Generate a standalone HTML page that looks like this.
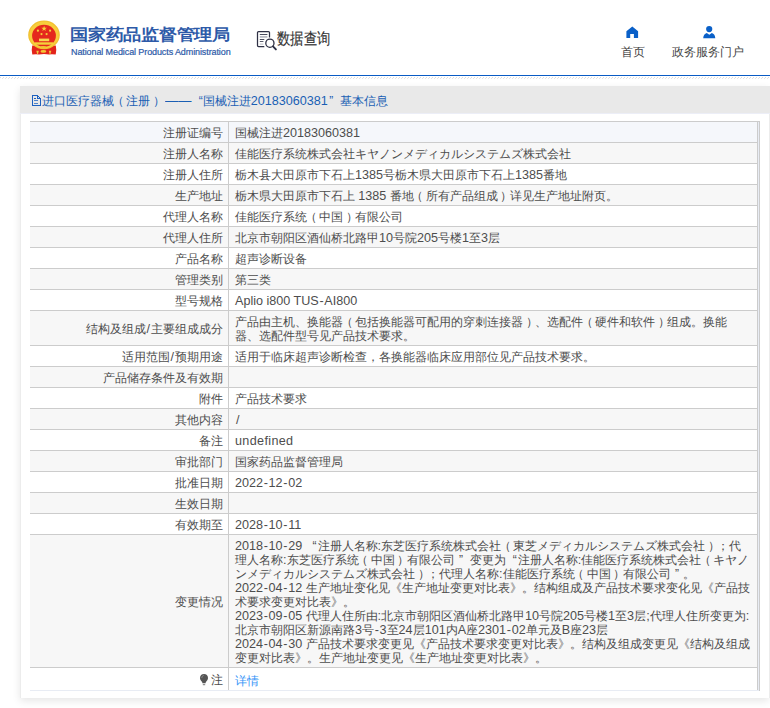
<!DOCTYPE html>
<html><head><meta charset="utf-8">
<style>
html,body{margin:0;padding:0;background:#fff;width:770px;height:708px;overflow:hidden;position:relative;font-family:"Liberation Sans",sans-serif;}
.abs{position:absolute;}
#emblem{position:absolute;left:26px;top:19px;width:36px;height:38px;}
#title{position:absolute;left:70px;top:21.8px;font-size:18px;font-weight:bold;color:#2d5aa8;white-space:nowrap;line-height:24px;letter-spacing:-0.25px;transform:scaleY(0.88);transform-origin:0 17px;}
#sub{position:absolute;left:71px;top:45.6px;font-size:9px;color:#2d5aa8;white-space:nowrap;line-height:12px;letter-spacing:-0.1px;-webkit-text-stroke:0.2px #2d5aa8;}
#sicon{position:absolute;left:256px;top:30px;width:22px;height:21px;}
#stext{position:absolute;left:277px;top:29px;font-size:16px;color:#333;white-space:nowrap;line-height:20px;transform-origin:0 0;transform:scaleX(0.835);-webkit-text-stroke:0.15px #333;}
.nav{position:absolute;font-size:12px;color:#444;white-space:nowrap;line-height:16px;}
#blue{position:absolute;left:0;top:75px;width:770px;height:1px;background:#0a5bc4;}
#hatch{position:absolute;left:0;top:77px;width:770px;height:2px;}
#panel{position:absolute;left:20px;top:86px;width:749px;height:612px;background:#fff;box-shadow:0 3px 8px rgba(0,0,0,0.10);}
#phead{position:absolute;left:20px;top:86px;width:750px;height:27px;background:#e9e9e9;}
#pline{position:absolute;left:20px;top:113px;width:750px;height:1px;background:#eceef7;}
#pl{position:absolute;left:20px;top:114px;width:1px;height:584px;background:#ececec;}
#pr{position:absolute;left:769px;top:114px;width:1px;height:584px;background:#ececec;}
#ptext{position:absolute;left:42px;top:92.5px;font-size:12px;color:#1a5fb4;white-space:nowrap;line-height:16px;}
#picon{position:absolute;left:31px;top:95px;width:10px;height:11px;}
#tbl{position:absolute;left:30px;top:121px;width:730px;height:570px;}
#ttop{position:absolute;left:30px;top:121px;width:730px;height:1px;background:#cccccc;}
.row{position:absolute;left:30px;width:728px;}
.lab{position:absolute;left:0;width:193px;text-align:right;font-size:12px;color:#4d4d4d;white-space:nowrap;}
.val{position:absolute;left:205px;font-size:12px;color:#4d4d4d;white-space:nowrap;line-height:14px;}
.hl{position:absolute;left:0;width:728px;height:1px;background:#cccccc;}
#vdiv{position:absolute;left:228px;top:121px;width:1px;height:569px;background:#cccccc;}
#vr1{position:absolute;left:757px;top:121px;width:1px;height:569px;background:#cccccc;}
#vr2{position:absolute;left:759px;top:121px;width:1px;height:570px;background:#cccccc;}
#vl{position:absolute;left:30px;top:122px;width:1px;height:569px;background:#eef1f7;opacity:0.5;}
#vb{position:absolute;left:30px;top:690px;width:728px;height:1px;background:#e8ecf4;}
#vm{position:absolute;left:758px;top:122px;width:1px;height:569px;background:#e8ecf4;}
.link{color:#3594f7;}
.l{font-size:12.6px;}
#ptext .l{top:0;}
.sl{margin:0 1px;}
#ptext .qr{padding-left:1.5px;}
#ptext .ql{width:10px;padding-left:6px;}
.hy{margin:0 0.7px;}
.pl{position:relative;left:-2.5px;}
.pr{position:relative;left:2.5px;}
.dd{display:inline-block;transform:scaleX(1.1);transform-origin:0 0;}
.ql{display:inline-block;width:12px;padding-left:7px;box-sizing:border-box;}
.qr{display:inline-block;width:12px;padding-left:4.5px;box-sizing:border-box;}
.bulb{display:inline-block;width:9px;height:11px;vertical-align:-1px;margin-right:1px;}
</style></head><body>
<svg class="abs" style="left:0;top:0" width="80" height="70" viewBox="0 0 80 70">
  <path d="M32.2 45.5 Q31.2 50 32.3 54.6 L36 54.3 L39 54.6 Q44 53.6 49 54.6 L52 54.3 L55.7 54.6 Q56.8 50 55.8 45.5 Z" fill="#e3241b"/>
  <ellipse cx="44" cy="34.9" rx="15.8" ry="14.3" fill="#f1bf2f"/>
  <ellipse cx="44" cy="34.9" rx="14.6" ry="13.3" fill="#f7cd3c"/>
  <ellipse cx="44" cy="35.8" rx="11.9" ry="11" fill="#e5281d"/>
  <polygon points="44.1,25.7 44.8,27.7 46.9,27.7 45.2,29 45.8,31 44.1,29.8 42.4,31 43,29 41.3,27.7 43.4,27.7" fill="#f7d23a"/>
  <circle cx="37.9" cy="30.7" r="1.1" fill="#f3cf3a"/>
  <circle cx="50.1" cy="30.7" r="1.1" fill="#f3cf3a"/>
  <circle cx="41.5" cy="34.1" r="1.1" fill="#f3cf3a"/>
  <circle cx="46.6" cy="34.1" r="1.1" fill="#f3cf3a"/>
  <rect x="39" y="38.6" width="10.2" height="2.6" fill="#f7d650"/>
  <rect x="35" y="42.3" width="18.1" height="2.4" fill="#f5d03a"/>
  <ellipse cx="43.4" cy="47.2" rx="2.9" ry="1.3" fill="#f3c232"/>
  <ellipse cx="43.4" cy="51.4" rx="2.9" ry="1.4" fill="#f4c634"/>
  <path d="M36.3 50.8 L38.8 50.8 L38 54.1 L37.2 54.1 Z" fill="#f2c640"/>
  <path d="M48.8 50.8 L51.3 50.8 L50.4 54.1 L49.6 54.1 Z" fill="#f2c640"/>
</svg>
<div id="title">国家药品监督管理局</div>
<div id="sub">National Medical Products Administration</div>
<svg class="abs" style="left:254px;top:28px" width="26" height="24" viewBox="0 0 26 24">
  <path d="M15.5 9.6 V4.6 Q15.5 3.5 14.4 3.5 H4.6 Q3.5 3.5 3.5 4.6 V17.4 Q3.5 18.5 4.6 18.5 H10.3" fill="none" stroke="#2e3044" stroke-width="1.25"/>
  <rect x="5.8" y="6" width="7.6" height="1" fill="#4a4d5e"/>
  <rect x="5.8" y="8" width="7.6" height="1.8" fill="#b9bbc4"/>
  <rect x="5.8" y="11" width="4.5" height="1" fill="#4a4d5e"/>
  <rect x="5.8" y="13" width="3.6" height="1" fill="#5a5d6c"/>
  <rect x="5.8" y="15.6" width="3.6" height="1" fill="#b9bbc4"/>
  <circle cx="15.9" cy="15.2" r="4.1" fill="none" stroke="#2e3044" stroke-width="1.3"/>
  <path d="M19 18.4 L21.9 21.4" stroke="#2e3044" stroke-width="1.9" stroke-linecap="round"/>
</svg>
<div id="stext">数据查询</div>
<svg class="abs" style="left:622px;top:22px" width="20" height="20" viewBox="0 0 20 20">
  <path d="M4.4 9.2 L10.3 4.6 L16.1 9.2 L16.1 15.9 L11.9 15.9 L11.9 11.9 L8.2 11.9 L8.2 15.9 L4.4 15.9 Z" fill="#0a60c8"/>
</svg>
<div class="nav" style="left:621px;top:43.5px">首页</div>
<svg class="abs" style="left:699px;top:22px" width="20" height="20" viewBox="0 0 20 20">
  <circle cx="10.2" cy="7.1" r="3.1" fill="#0a60c8"/>
  <path d="M4.2 16.2 C4.4 13.5 5.6 11.6 7.8 11 L10.3 12.8 L12.8 11 C15 11.6 16.1 13.5 16.3 16.2 Z" fill="#0a60c8"/>
</svg>
<div class="nav" style="left:672px;top:43.5px">政务服务门户</div>
<div id="blue"></div>
<svg id="hatch" width="770" height="2">
  <defs><pattern id="hp" width="3" height="2" patternUnits="userSpaceOnUse">
    <rect x="0" y="0" width="1" height="1" fill="#dcdcdc"/>
    <rect x="2" y="1" width="1" height="1" fill="#e4e4e4"/>
  </pattern></defs>
  <rect width="770" height="2" fill="url(#hp)"/>
</svg>
<div id="panel"></div>
<div id="phead"></div><div id="pline"></div><div id="pl"></div><div id="pr"></div>
<svg class="abs" style="left:29px;top:93px" width="14" height="15" viewBox="0 0 14 15" shape-rendering="crispEdges">
  <g fill="#1d61c0">
  <rect x="3" y="2" width="1" height="11"/>
  <rect x="3" y="2" width="6" height="1"/>
  <rect x="3" y="12" width="9" height="1"/>
  <rect x="11" y="5" width="1" height="8"/>
  <rect x="9" y="3" width="1" height="1"/>
  <rect x="10" y="4" width="1" height="1"/>
  <rect x="8" y="3" width="1" height="3"/>
  <rect x="8" y="5" width="3" height="1"/>
  <rect x="5" y="5" width="2" height="1"/>
  <rect x="5" y="7" width="4" height="1" opacity="0.75"/>
  <rect x="5" y="10" width="4" height="1" opacity="0.75"/>
  </g>
</svg>
<div id="ptext">进口医疗器械<span class="pl">（</span>注册<span class="pr">）</span> <span class="dd">——</span> <span class="ql">“</span>国械注进<span class="l">20183060381</span><span class="qr">”</span>基本信息</div>
<div class="row" style="top:122px;height:20px;background:#f5f7fb">
<div class="lab" style="top:0.6px;height:20px;line-height:20px">注册证编号</div>
<div class="val" style="top:3.5px">国械注进<span class="l">20183060381</span></div>
<div class="hl" style="top:20px"></div>
</div>
<div class="row" style="top:143px;height:20px;background:#f7f7f7">
<div class="lab" style="top:0.6px;height:20px;line-height:20px">注册人名称</div>
<div class="val" style="top:3.5px">佳能医疗系统株式会社キヤノンメディカルシステムズ株式会社</div>
<div class="hl" style="top:20px"></div>
</div>
<div class="row" style="top:164px;height:20px;background:#ffffff">
<div class="lab" style="top:0.6px;height:20px;line-height:20px">注册人住所</div>
<div class="val" style="top:3.5px">栃木县大田原市下石上<span class="l">1385</span>号栃木県大田原市下石上<span class="l">1385</span>番地</div>
<div class="hl" style="top:20px"></div>
</div>
<div class="row" style="top:185px;height:20px;background:#f7f7f7">
<div class="lab" style="top:0.6px;height:20px;line-height:20px">生产地址</div>
<div class="val" style="top:3.5px">栃木県大田原市下石上 <span class="l">1385</span> 番地<span class="pl">（</span>所有产品组成<span class="pr">）</span>详见生产地址附页。</div>
<div class="hl" style="top:20px"></div>
</div>
<div class="row" style="top:206px;height:20px;background:#ffffff">
<div class="lab" style="top:0.6px;height:20px;line-height:20px">代理人名称</div>
<div class="val" style="top:3.5px">佳能医疗系统<span class="pl">（</span>中国<span class="pr">）</span>有限公司</div>
<div class="hl" style="top:20px"></div>
</div>
<div class="row" style="top:227px;height:20px;background:#f7f7f7">
<div class="lab" style="top:0.6px;height:20px;line-height:20px">代理人住所</div>
<div class="val" style="top:3.5px">北京市朝阳区酒仙桥北路甲<span class="l">10</span>号院<span class="l">205</span>号楼<span class="l">1</span>至<span class="l">3</span>层</div>
<div class="hl" style="top:20px"></div>
</div>
<div class="row" style="top:248px;height:20px;background:#ffffff">
<div class="lab" style="top:0.6px;height:20px;line-height:20px">产品名称</div>
<div class="val" style="top:3.5px">超声诊断设备</div>
<div class="hl" style="top:20px"></div>
</div>
<div class="row" style="top:269px;height:20px;background:#f7f7f7">
<div class="lab" style="top:0.6px;height:20px;line-height:20px">管理类别</div>
<div class="val" style="top:3.5px">第三类</div>
<div class="hl" style="top:20px"></div>
</div>
<div class="row" style="top:290px;height:20px;background:#ffffff">
<div class="lab" style="top:0.6px;height:20px;line-height:20px">型号规格</div>
<div class="val" style="top:3.5px"><span class="l">Aplio i800 TUS<span class="hy">-</span>AI800</span></div>
<div class="hl" style="top:20px"></div>
</div>
<div class="row" style="top:311px;height:34px;background:#f7f7f7">
<div class="lab" style="top:0.6px;height:34px;line-height:34px">结构及组成<span class="l sl">/</span>主要组成成分</div>
<div class="val" style="top:3.5px">产品由主机、换能器<span class="pl">（</span>包括换能器可配用的穿刺连接器<span class="pr">）</span>、选配件<span class="pl">（</span>硬件和软件<span class="pr">）</span>组成。换能<br>器、选配件型号见产品技术要求。</div>
<div class="hl" style="top:34px"></div>
</div>
<div class="row" style="top:346px;height:20px;background:#ffffff">
<div class="lab" style="top:0.6px;height:20px;line-height:20px">适用范围<span class="l sl">/</span>预期用途</div>
<div class="val" style="top:3.5px">适用于临床超声诊断检查，各换能器临床应用部位见产品技术要求。</div>
<div class="hl" style="top:20px"></div>
</div>
<div class="row" style="top:367px;height:20px;background:#f7f7f7">
<div class="lab" style="top:0.6px;height:20px;line-height:20px">产品储存条件及有效期</div>
<div class="hl" style="top:20px"></div>
</div>
<div class="row" style="top:388px;height:20px;background:#ffffff">
<div class="lab" style="top:0.6px;height:20px;line-height:20px">附件</div>
<div class="val" style="top:3.5px">产品技术要求</div>
<div class="hl" style="top:20px"></div>
</div>
<div class="row" style="top:409px;height:20px;background:#f7f7f7">
<div class="lab" style="top:0.6px;height:20px;line-height:20px">其他内容</div>
<div class="val" style="top:3.5px"><span class="l sl">/</span></div>
<div class="hl" style="top:20px"></div>
</div>
<div class="row" style="top:430px;height:20px;background:#ffffff">
<div class="lab" style="top:0.6px;height:20px;line-height:20px">备注</div>
<div class="val" style="top:3.5px"><span class="l" style="letter-spacing:0.35px">undefined</span></div>
<div class="hl" style="top:20px"></div>
</div>
<div class="row" style="top:451px;height:20px;background:#f7f7f7">
<div class="lab" style="top:0.6px;height:20px;line-height:20px">审批部门</div>
<div class="val" style="top:3.5px">国家药品监督管理局</div>
<div class="hl" style="top:20px"></div>
</div>
<div class="row" style="top:472px;height:20px;background:#ffffff">
<div class="lab" style="top:0.6px;height:20px;line-height:20px">批准日期</div>
<div class="val" style="top:3.5px"><span class="l">2022<span class="hy">-</span>12<span class="hy">-</span>02</span></div>
<div class="hl" style="top:20px"></div>
</div>
<div class="row" style="top:493px;height:20px;background:#f7f7f7">
<div class="lab" style="top:0.6px;height:20px;line-height:20px">生效日期</div>
<div class="hl" style="top:20px"></div>
</div>
<div class="row" style="top:514px;height:20px;background:#ffffff">
<div class="lab" style="top:0.6px;height:20px;line-height:20px">有效期至</div>
<div class="val" style="top:3.5px"><span class="l">2028<span class="hy">-</span>10<span class="hy">-</span>11</span></div>
<div class="hl" style="top:20px"></div>
</div>
<div class="row" style="top:535px;height:132px;background:#f7f7f7">
<div class="lab" style="top:0.6px;height:132px;line-height:132px">变更情况</div>
<div class="val" style="top:3.5px"><span class="l">2018<span class="hy">-</span>10<span class="hy">-</span>29</span> <span class="ql">“</span>注册人名称<span class="l">:</span>东芝医疗系统株式会社<span class="pl">（</span>東芝メディカルシステムズ株式会社<span class="pr">）</span>；代<br>理人名称<span class="l">:</span>东芝医疗系统<span class="pl">（</span>中国<span class="pr">）</span>有限公司<span class="qr">”</span> 变更为<span class="ql">“</span>注册人名称<span class="l">:</span>佳能医疗系统株式会社<span class="pl">（</span>キヤノ<br>ンメディカルシステムズ株式会社<span class="pr">）</span>；代理人名称<span class="l">:</span>佳能医疗系统<span class="pl">（</span>中国<span class="pr">）</span>有限公司<span class="qr">”</span>。<br><span class="l">2022<span class="hy">-</span>04<span class="hy">-</span>12</span> 生产地址变化见《生产地址变更对比表》。结构组成及产品技术要求变化见《产品技<br>术要求变更对比表》。<br><span class="l">2023<span class="hy">-</span>09<span class="hy">-</span>05</span> 代理人住所由<span class="l">:</span>北京市朝阳区酒仙桥北路甲<span class="l">10</span>号院<span class="l">205</span>号楼<span class="l">1</span>至<span class="l">3</span>层<span class="l">;</span>代理人住所变更为<span class="l">:</span><br>北京市朝阳区新源南路<span class="l">3</span>号<span class="l"><span class="hy">-</span>3</span>至<span class="l">24</span>层<span class="l">101</span>内<span class="l">A</span>座<span class="l">2301<span class="hy">-</span>02</span>单元及<span class="l">B</span>座<span class="l">23</span>层<br><span class="l">2024<span class="hy">-</span>04<span class="hy">-</span>30</span> 产品技术要求变更见《产品技术要求变更对比表》。结构及组成变更见《结构及组成<br>变更对比表》。生产地址变更见《生产地址变更对比表》。</div>
<div class="hl" style="top:132px"></div>
</div>
<div class="row" style="top:668px;height:22px;background:#ffffff">
<div class="lab" style="top:1px;height:22px;line-height:22px">注</div>
<svg style="position:absolute;left:169px;top:5px" width="10" height="13" viewBox="0 0 10 13"><path d="M5 1 C7.4 1 9 2.7 9 4.9 C9 6.4 8.1 7.5 7.3 8.5 C6.8 9.1 6.6 9.6 6.6 10.3 L3.4 10.3 C3.4 9.6 3.2 9.1 2.7 8.5 C1.9 7.5 1 6.4 1 4.9 C1 2.7 2.6 1 5 1 Z" fill="#555"/><path d="M2.8 5 C2.8 3.6 3.6 2.6 4.8 2.3" fill="none" stroke="#aaa" stroke-width="0.6"/><rect x="3.8" y="11.2" width="2.4" height="1" fill="#777"/></svg>
<div class="val" style="top:2px;line-height:22px"><span class="link">详情</span></div>
</div>
<div id="ttop"></div>

<div id="vb"></div>
<div id="vm"></div>
<div id="vdiv"></div>
<div id="vr1"></div>
<div id="vr2"></div>
</body></html>
